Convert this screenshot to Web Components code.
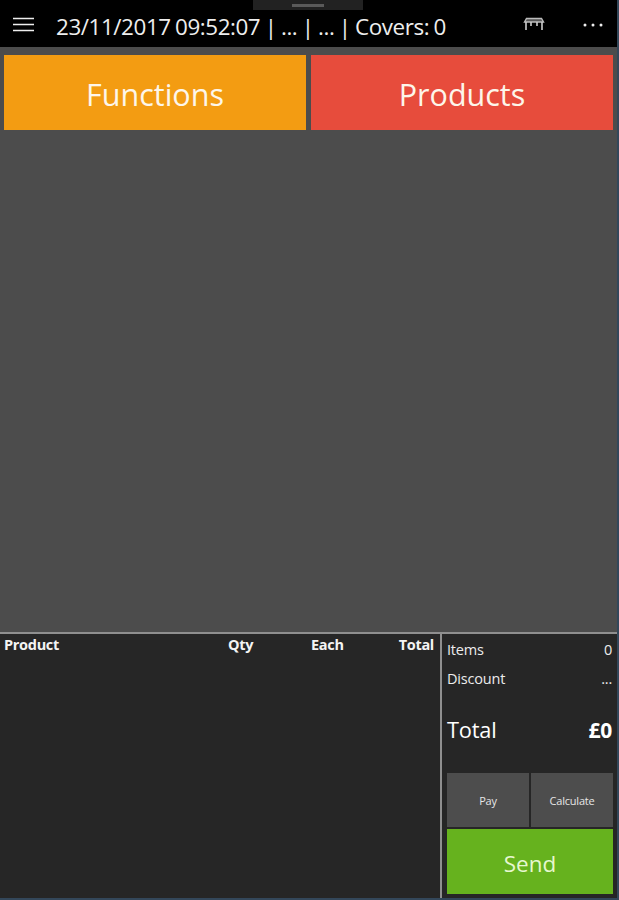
<!DOCTYPE html>
<html><head><meta charset="utf-8">
<style>
html,body{margin:0;padding:0;background:#4c4c4c}
body{width:619px;height:900px;overflow:hidden;font-family:"Open Sans","Noto Sans",sans-serif;color:#fff}
</style></head><body>
<pos-app></pos-app>
<template id="t-app"><style>
:host{display:flex;flex-direction:column;width:619px;height:900px;box-sizing:border-box;border-right:2px solid #33475a;border-bottom:2px solid #33475a;position:relative;background:#4c4c4c}
.tabs{display:grid;grid-template-columns:302px 302px;gap:5px;padding:8px 0 0 4px;flex:1;align-content:start}
.bottom{display:flex;height:264px;border-top:2px solid #8f8f8f;background:#262626;box-sizing:content-box}
</style>
<pos-header></pos-header>
<div class="tabs"><pos-tile color="#f39c12">Functions</pos-tile><pos-tile color="#e74c3c">Products</pos-tile></div>
<div class="bottom"><pos-table></pos-table><pos-summary></pos-summary></div>
</template>
<template id="t-header"><style>
:host{display:flex;align-items:center;height:47px;background:#000;position:relative;box-sizing:border-box}
.grab{position:absolute;left:253px;top:0;width:110px;height:10px;background:#222;display:flex;justify-content:center;align-items:flex-start}
.grab i{display:block;width:32px;height:3px;margin-top:4px;background:#5a5a5a}
.menu{width:56px;flex:none;display:flex;padding:1px 0 0 13px;box-sizing:border-box}
.title{font-size:22.4px;line-height:47px;color:#eee;white-space:nowrap;flex:1;letter-spacing:-.42px;word-spacing:-1px;padding-top:3px;box-sizing:border-box;height:47px}
.ic{display:flex;flex:none}
.table{margin-right:38px;margin-top:1px}
.more{margin-right:14px;margin-top:3px}
</style>
<div class="grab"><i></i></div>
<div class="menu"><svg width="21" height="15" viewBox="0 0 21 15"><path d="M0 1.5H21M0 7.5H21M0 13.5H21" stroke="#eee" stroke-width="1.5" fill="none"/></svg></div>
<div class="title">23/11/2017 09:52:07 | ... | ... | Covers: 0</div>
<div class="ic table"><svg width="22" height="14" viewBox="0 0 22 14"><path d="M1.500 5 3.500 1.500H18.500L20.500 5Z" fill="#555" stroke="#bbb" stroke-width="1.400"/><path d="M3 5V13M8 5V9M14 5V9M19 5V13" stroke="#ccc" stroke-width="1.600" fill="none"/></svg></div>
<div class="ic more"><svg width="20" height="4" viewBox="0 0 20 4"><circle cx="2" cy="2" r="1.500" fill="#eee"/><circle cx="10" cy="2" r="1.500" fill="#eee"/><circle cx="18" cy="2" r="1.500" fill="#eee"/></svg></div>
</template>
<template id="t-tile"><style>
:host{display:flex;align-items:center;justify-content:center;height:75px;box-sizing:border-box;padding-top:2px;font-size:30.500px;color:#fdf6ea;font-family:"Open Sans","Noto Sans",sans-serif}
</style><slot></slot></template>
<template id="t-table"><style>
:host{display:block;width:440px;flex:none;border-right:2px solid #8f8f8f;box-sizing:content-box;height:264px}
.head{display:grid;grid-template-columns:224px 83px 1fr auto;padding:1px 6px 0 4px;font-size:14.5px;font-weight:700;line-height:19px;color:#f4f4f4;letter-spacing:-.3px}
.total{text-align:right}
</style><div class="head"><span>Product</span><span>Qty</span><span>Each</span><span class="total">Total</span></div></template>
<template id="t-summary"><style>
:host{flex:1;display:flex;flex-direction:column;padding:0 5px 4px 5px;box-sizing:border-box;min-width:0}
.row{display:flex;justify-content:space-between;font-size:14.500px;color:#ececec;letter-spacing:-.2px;line-height:19px;font-weight:500}
.r1{margin-top:6px}.r2{margin-top:10px}
.tot{display:flex;justify-content:space-between;font-size:21.800px;line-height:30px;margin-top:27px;color:#fff;letter-spacing:-.2px;font-weight:500}
.tot b{font-size:21px}
.btns{margin-top:auto;display:grid;grid-template-columns:82px 82px;gap:2px}
.send{grid-column:1/3;height:65px;box-sizing:border-box;padding-top:4px;background:#66b21e;color:#e6f7d0;font-size:22.500px;display:flex;align-items:center;justify-content:center}
.sm{height:54px;background:#4d4d4d;font-size:11px;color:#e6e6e6;font-weight:500;display:flex;align-items:center;justify-content:center;letter-spacing:-.2px}
</style>
<div class="row r1"><span>Items</span><span>0</span></div>
<div class="row r2"><span>Discount</span><span>...</span></div>
<div class="tot"><span>Total</span><b>£0</b></div>
<div class="btns"><div class="sm">Pay</div><div class="sm">Calculate</div><div class="send">Send</div></div>
</template>
<script>
for (const [tag,id] of [['pos-app','t-app'],['pos-header','t-header'],['pos-tile','t-tile'],['pos-table','t-table'],['pos-summary','t-summary']]) {
  customElements.define(tag, class extends HTMLElement {
    constructor(){super();this.attachShadow({mode:'open'}).appendChild(document.getElementById(id).content.cloneNode(true));}
    connectedCallback(){const c=this.getAttribute('color');if(c)this.style.background=c;}
  });
}
</script>
</body></html>
